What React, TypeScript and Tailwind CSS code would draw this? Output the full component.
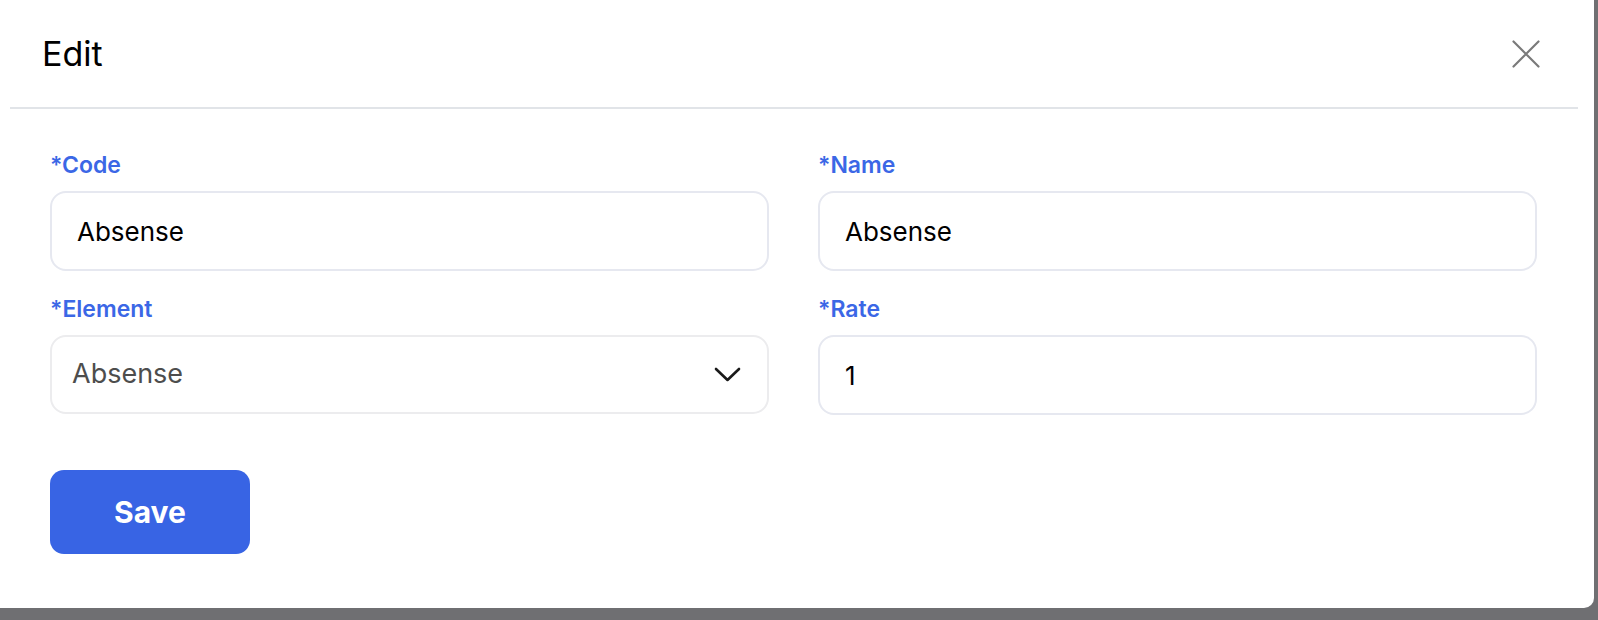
const font = { fontFamily: "Inter, 'Noto Sans', sans-serif" };

function Label({ children }: { children: string }) {
  return (
    <label className="block h-[28px] text-[23px] leading-[28px] font-semibold text-[#3b67e6]">
      {children}
    </label>
  );
}

function TextField({ value }: { value: string }) {
  return (
    <div className="mt-[12px] h-[80px] rounded-[16px] border-2 border-[#e6e8f0] bg-white flex items-center pl-[25px] text-[26px] text-black">
      {value}
    </div>
  );
}

function SelectField({ value }: { value: string }) {
  return (
    <div className="mt-[12px] h-[79px] rounded-[16px] border-2 border-[#ececee] bg-white flex items-center justify-between pl-[20px] pr-[26px] text-[27px] text-[#4d4d4d]">
      <span>{value}</span>
      <svg width="27" height="15" viewBox="0 0 27 15" fill="none">
        <polyline
          points="2,2 13.5,13 25,2"
          stroke="#1a1a1a"
          strokeWidth="2.6"
          strokeLinecap="round"
          strokeLinejoin="round"
        />
      </svg>
    </div>
  );
}

export default function App() {
  return (
    <div className="h-[620px] w-full bg-[#6f6f72] overflow-hidden" style={font}>
      <div className="w-[1594px] h-[608px] bg-white rounded-br-[10px]">
        {/* header */}
        <div className="h-[107px] flex items-center justify-between pl-[42px] pr-[54px]">
          <h2 className="text-[34px] font-normal text-black">Edit</h2>
          <svg width="28" height="28" viewBox="0 0 28 28" fill="none">
            <path d="M1.5 1.5 L26.5 26.5 M26.5 1.5 L1.5 26.5" stroke="#7a7a7a" strokeWidth="2.2" strokeLinecap="round" />
          </svg>
        </div>
        <div className="ml-[10px] w-[1568px] h-[2px] bg-[#e1e4e8]" />

        {/* form */}
        <div className="pl-[50px] pt-[42px]">
          <div className="w-[1487px] grid grid-cols-2 gap-x-[49px]">
            <div>
              <Label>*Code</Label>
              <TextField value="Absense" />
            </div>
            <div>
              <Label>*Name</Label>
              <TextField value="Absense" />
            </div>
            <div className="mt-[24px]">
              <Label>*Element</Label>
              <SelectField value="Absense" />
            </div>
            <div className="mt-[24px]">
              <Label>*Rate</Label>
              <TextField value="1" />
            </div>
          </div>

          <button className="mt-[55px] w-[200px] h-[84px] rounded-[14px] bg-[#3864e4] text-white text-[30px] font-bold flex items-center justify-center">
            Save
          </button>
        </div>
      </div>
    </div>
  );
}
